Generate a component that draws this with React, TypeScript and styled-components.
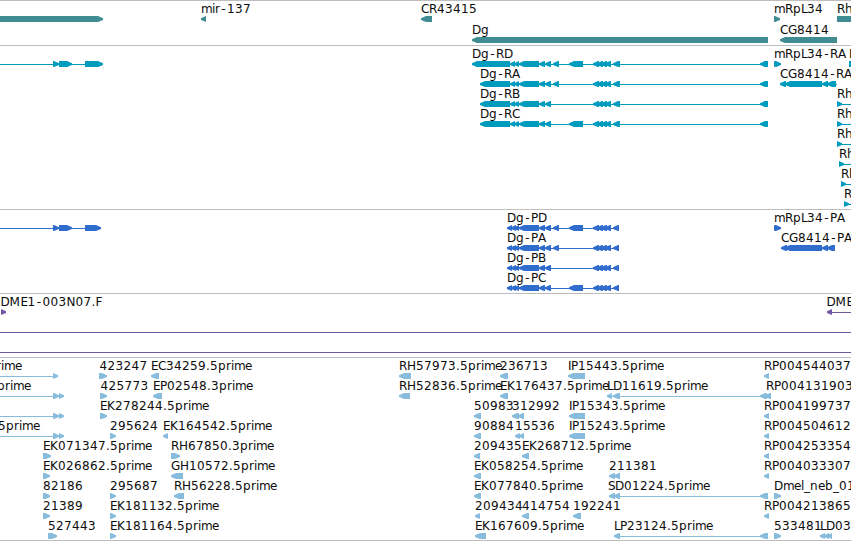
import React from "react";
import styled, { createGlobalStyle } from "styled-components";

const GlobalStyle = createGlobalStyle`
  body {
    margin: 0;
    background: #ffffff;
  }
`;

const BrowserBox = styled.main`
  display: flex;
  flex-direction: column;
  width: 851px;
  overflow: hidden;
  border-bottom: 1px solid #bebebe;
`;

const TrackBox = styled.section<{ $padding: number }>`
  display: flex;
  flex-direction: column;
  border-top: 1px solid #bebebe;
  padding-bottom: ${({ $padding }) => $padding}px;
`;

const LaneSvg = styled.svg<{ $height: number; $color: string }>`
  display: block;
  width: 851px;
  height: ${({ $height }) => $height}px;
  color: ${({ $color }) => $color};
  overflow: visible;
`;

const Label = styled.text`
  font-family: "DejaVu Sans", sans-serif;
  font-size: 12px;
  fill: #0c0c0c;
`;

const Exon = styled.polygon`
  fill: currentColor;
`;

const Intron = styled.rect`
  fill: currentColor;
`;

type Span = [number, number];

type Feature = {
  x?: number;
  label?: string;
  dir?: "left" | "right";
  line?: Span;
  exons?: Span[];
};

type Track = {
  name: string;
  color: string;
  laneHeight: number;
  padding: number;
  lanes: Feature[][];
};

// whole pixel advance of every character used in the labels
const advances: Record<string, number> = {
  A: 8, B: 7, C: 8, D: 9, E: 7, F: 7, G: 9, H: 9, I: 3, K: 8, L: 6, M: 11,
  N: 9, P: 7, R: 8, S: 7, m: 11, r: 5, i: 3, e: 7, l: 3, ".": 4, "-": 7, _: 6,
};

const glyphPositions = (x: number, text: string) => {
  let next = x;
  return text
    .split("")
    .map(char => {
      // the hyphen is narrower than its cell, so it is centred
      const current = char === "-" ? next + 1.25 : next;
      next += advances[char] || 8;
      return current;
    })
    .join(" ");
};

const exonPoints = ([start, end]: Span, dir: "left" | "right") => {
  const head = Math.min(5, end - start);
  const tip = dir === "left" ? start : end;
  const neck = dir === "left" ? start + head : end - head;
  const base = dir === "left" ? end : start;
  return `${tip},17.2 ${neck},15 ${base},15 ${base},21 ${neck},21 ${tip},18.9`;
};

const left = (x: number, label: string, exons: Span[], line?: Span): Feature => ({
  x, label, exons, line, dir: "left",
});

const right = (x: number, label: string, exons: Span[], line?: Span): Feature => ({
  x, label, exons, line, dir: "right",
});

const unnamed = (exons: Span[], line?: Span): Feature => ({
  exons, line, dir: "right",
});

const coding: Span[] = [[519, 539], [539, 545], [545, 551]];
const exonD: Span = [553, 559];
const exonE: Span = [569, 583];
const tail: Span[] = [[593, 599], [597, 603], [601, 607], [605, 611]];

const transcript = (x: number, label: string, extra: Span[]) =>
  left(
    x,
    label,
    [[x, 510], [510, 515], [514, 519], ...coding, ...extra, ...tail, [613, 620], [760, 768]],
    [x + 6, 766]
  );

const protein = (label: string, extra: Span[]) =>
  left(
    507,
    label,
    [[507, 512], [511, 516], [514, 519], ...coding, ...extra, ...tail, [613, 619]],
    [513, 617]
  );

const tracks: Track[] = [
  {
    name: "genes",
    color: "#408c92",
    laneHeight: 21,
    padding: 2,
    lanes: [
      [
        unnamed([[-10, 103]]),
        left(201, "mir-137", [[201, 206]]),
        left(421, "CR43415", [[421, 432]]),
        right(774, "mRpL34", [[774, 780]]),
        right(837, "Rh", [[837, 870]]),
      ],
      [left(472, "Dg", [[472, 768]]), left(780, "CG8414", [[780, 837]])],
    ],
  },
  {
    name: "transcripts",
    color: "#009cbe",
    laneHeight: 20,
    padding: 3,
    lanes: [
      [
        unnamed([[53, 59], [59, 72], [85, 103]], [0, 98]),
        transcript(472, "Dg-RD", [exonD, exonE]),
        right(774, "mRpL34-RA", [[774, 778], [775, 781]]),
        right(849, "Rh", [[849, 870]]),
      ],
      [
        transcript(480, "Dg-RA", [exonD]),
        left(780, "CG8414-RA", [[780, 786], [785, 822], [822, 828], [827, 836]], [784, 837]),
      ],
      [transcript(480, "Dg-RB", []), right(837, "Rh", [[837, 842]], [837, 851])],
      [transcript(480, "Dg-RC", [exonE]), right(837, "Rh", [[837, 842]], [837, 851])],
      [right(837, "Rh", [[837, 842]], [837, 851])],
      [right(839, "Rh", [[839, 844]], [839, 851])],
      [right(841, "Rh", [[841, 846]], [841, 851])],
      [right(844, "Rh", [[844, 849]], [844, 851])],
    ],
  },
  {
    name: "proteins",
    color: "#306ccc",
    laneHeight: 20,
    padding: 3,
    lanes: [
      [
        unnamed([[53, 59], [59, 72], [85, 101]], [0, 96]),
        protein("Dg-PD", [exonD, exonE]),
        right(774, "mRpL34-PA", [[774, 778], [775, 781]]),
      ],
      [
        protein("Dg-PA", [exonD]),
        left(781, "CG8414-PA", [[781, 787], [785, 822], [822, 828], [827, 835]], [785, 834]),
      ],
      [protein("Dg-PB", [])],
      [protein("Dg-PC", [exonE])],
    ],
  },
  {
    name: "clones",
    color: "#7058a4",
    laneHeight: 20,
    padding: 3,
    lanes: [
      [right(0.4, "DME1-003N07.F", [[1, 6]]), left(826.4, "DME", [[827, 832]], [830, 851])],
      [unnamed([], [0, 851])],
      [unnamed([], [0, 851])],
    ],
  },
  {
    name: "ests",
    color: "#88bcdc",
    laneHeight: 20,
    padding: 2,
    lanes: [
      [
        right(-12, "prime", [[53, 58]], [0, 56]),
        right(99.5, "423247", [[99, 107]]),
        left(151, "EC34259.5prime", [[151, 159]]),
        left(399, "RH57973.5prime", [[399, 411]]),
        left(500, "236713", [[500, 508]]),
        left(568, "IP15443.5prime", [[568, 585]]),
        left(764, "RP004544037", [[764, 769]]),
      ],
      [
        right(-3, "prime", [[53, 59], [59, 64]], [0, 62]),
        right(100.5, "425773", [[100, 107]]),
        left(153, "EP02548.3prime", [[153, 162]]),
        left(399, "RH52836.5prime", [[399, 410]]),
        left(500, "EK176437.5prime", [[500, 508]]),
        left(607, "LD11619.5prime", [[607, 612], [613, 620], [760, 767], [765, 771]], [609, 769]),
        left(766, "RP004131903", []),
      ],
      [
        unnamed([[53, 59], [59, 64]], [0, 62]),
        right(100, "EK278244.5prime", [[100, 107]]),
        left(474, "50983", [[474, 481]]),
        left(512, "312992", [[512, 519], [518, 524]]),
        left(569, "IP15343.5prime", [[569, 585]]),
        left(764, "RP004199737", [[764, 769]]),
      ],
      [
        right(-2, "5prime", [[53, 59], [59, 64]], [0, 62]),
        right(110, "295624", [[110, 116]]),
        left(163, "EK164542.5prime", [[163, 168]]),
        left(474, "90884", [[474, 481]]),
        left(515, "15536", [[515, 520], [519, 524]]),
        left(569, "IP15243.5prime", [[569, 585]]),
        left(764, "RP004504612", [[764, 769]]),
      ],
      [
        right(43, "EK071347.5prime", [[43, 51]]),
        right(171, "RH67850.3prime", [[171, 180]]),
        left(474, "209435", [[474, 480]]),
        left(522, "EK268712.5prime", [[522, 529]]),
        left(764, "RP004253354", [[764, 769]]),
      ],
      [
        right(43, "EK026862.5prime", [[43, 50]]),
        left(171, "GH10572.5prime", [[171, 183]]),
        left(474, "EK058254.5prime", [[474, 481]]),
        left(609, "211381", [[609, 615], [614, 620]]),
        left(764, "RP004033307", [[764, 769]]),
      ],
      [
        right(43, "82186", [[43, 50]]),
        right(110, "295687", [[110, 116]]),
        left(174, "RH56228.5prime", [[174, 184]]),
        left(474, "EK077840.5prime", [[474, 481]]),
        left(608, "SD01224.5prime", [[609, 615], [614, 620], [760, 768]], [611, 766]),
        right(774, "Dmel_neb_01", [[774, 781]]),
      ],
      [
        right(43, "21389", [[43, 50]]),
        right(110, "EK181132.5prime", [[110, 116]]),
        left(475, "209434", [[475, 480]]),
        left(522, "414754", [[522, 529]]),
        left(573, "192241", [[573, 581]]),
        left(764, "RP004213865", [[764, 769]]),
      ],
      [
        right(48, "527443", [[48, 57]]),
        right(110, "EK181164.5prime", [[110, 116]]),
        left(475, "EK167609.5prime", [[475, 486]]),
        left(614, "LP23124.5prime", [[614, 620], [760, 768]], [616, 766]),
        right(774, "533481", [[774, 781]]),
        left(820, "LD03", [[820, 825], [824, 829], [827, 832]]),
      ],
    ],
  },
];

const FeatureGlyph = ({ x = 0, label, dir = "left", line, exons = [] }: Feature) => (
  <g>
    {line && <Intron x={line[0]} y={18} width={line[1] - line[0]} height={1} />}
    {exons.map((exon, index) => (
      <Exon key={index} points={exonPoints(exon, dir)} />
    ))}
    {label && (
      <Label x={glyphPositions(x, label)} y={12}>
        {label}
      </Label>
    )}
  </g>
);

const App = () => {
  return (
    <BrowserBox>
      <GlobalStyle />
      {tracks.map(({ name, color, laneHeight, padding, lanes }) => (
        <TrackBox key={name} $padding={padding}>
          {lanes.map((features, lane) => (
            <LaneSvg key={lane} $height={laneHeight} $color={color}>
              {features.map((feature, index) => (
                <FeatureGlyph key={index} {...feature} />
              ))}
            </LaneSvg>
          ))}
        </TrackBox>
      ))}
    </BrowserBox>
  );
};

export default App;
